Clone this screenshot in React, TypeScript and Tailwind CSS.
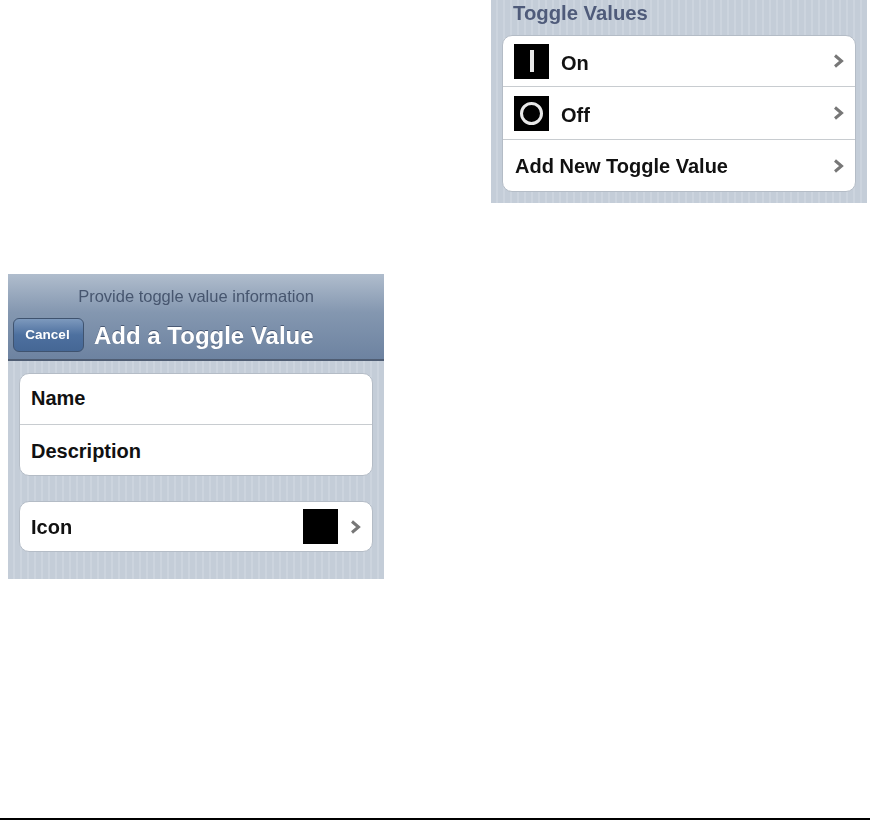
import React from 'react';

const stripes =
  'bg-[repeating-linear-gradient(90deg,#c4cdd8_0px,#c4cdd8_5px,#ccd4de_5px,#ccd4de_7px)]';

const Chevron = () => (
  <svg width="11" height="14" viewBox="0 0 11 14" className="shrink-0 ml-[1px] mr-[-1px]">
    <path d="M2 1.5 L8.5 7 L2 12.5" fill="none" stroke="#777" strokeWidth="3" />
  </svg>
);

const IconBox = ({ children }: { children?: React.ReactNode }) => (
  <div className="w-[35px] h-[35px] bg-black flex items-center justify-center shrink-0">{children}</div>
);

const Row = ({ children, last, h, pl = 'pl-3' }: { children: React.ReactNode; last?: boolean; h: string; pl?: string }) => (
  <div className={`flex items-center pr-3 ${pl} ${h} ${last ? '' : 'border-b border-[#c8ccd0]'}`}>{children}</div>
);

const Card = ({ children }: { children: React.ReactNode }) => (
  <div className="bg-white rounded-[10px] border border-[#b4bcc6] overflow-hidden">{children}</div>
);

const Label = ({ children, nudge = '' }: { children: React.ReactNode; nudge?: string }) => (
  <span className={`block text-[20px] leading-[24px] font-bold text-[#111] ${nudge}`}>{children}</span>
);

export default function App() {
  return (
    <div className="w-[870px] h-[820px] bg-white flex flex-col font-['Liberation_Sans',Arial,sans-serif]">
      {/* Toggle values list */}
      <div className="flex justify-end pr-[3px]">
        <div className={`w-[376px] h-[203px] ${stripes}`}>
          <div className="px-[11px] blur-[0.5px]">
            <div className="h-[35px] pl-[11px] text-[20.3px] leading-[26px] font-bold text-[#4f5b7a]">Toggle Values</div>
            <Card>
              <Row h="h-[51px]" pl="pl-[11px]">
                <IconBox>
                  <div className="w-[4px] h-[22px] bg-[#e8e8e8]" />
                </IconBox>
                <div className="ml-[12px] flex-1"><Label nudge="mt-[4px]">On</Label></div>
                <Chevron />
              </Row>
              <Row h="h-[53px]" pl="pl-[11px]">
                <IconBox>
                  <div className="w-[23px] h-[23px] rounded-full border-[3px] border-[#e8e8e8]" />
                </IconBox>
                <div className="ml-[12px] flex-1"><Label nudge="mt-[4px]">Off</Label></div>
                <Chevron />
              </Row>
              <Row h="h-[51px]" last>
                <div className="flex-1"><Label>Add New Toggle Value</Label></div>
                <Chevron />
              </Row>
            </Card>
          </div>
        </div>
      </div>

      {/* Add a toggle value form */}
      <div className={`ml-[8px] mt-[71px] w-[376px] h-[305px] ${stripes}`}>
        <div className="h-[87px] bg-[linear-gradient(180deg,#b0bdcd_0%,#8497b0_45%,#6d83a1_100%)] border-b-2 border-[#4f5d73]">
          <div className="blur-[0.5px]">
            <div className="pt-[12px] text-center text-[16.5px] leading-[20px] text-[#47566f]">Provide toggle value information</div>
            <div className="flex items-center mt-[10px] pl-[5px]">
              <div className="w-[71px] h-[34px] rounded-[6px] border border-[#3f536f] bg-[linear-gradient(180deg,#7d99bd_0%,#4d709f_50%,#456795_100%)] flex items-center justify-center pr-[2px] text-[13.5px] font-bold text-white">
                Cancel
              </div>
              <div className="ml-[10px] mt-[2px] text-[24px] font-bold text-white [text-shadow:0_-1px_0_#4a5a75]">Add a Toggle Value</div>
            </div>
          </div>
        </div>
        <div className="px-[11px] pt-[12px] blur-[0.5px]">
          <Card>
            <Row h="h-[51px]" pl="pl-[11px]"><Label nudge="mb-[2px]">Name</Label></Row>
            <Row h="h-[50px]" pl="pl-[11px]" last><Label nudge="mt-[2px]">Description</Label></Row>
          </Card>
          <div className="mt-[25px]">
            <Card>
              <Row h="h-[49px]" pl="pl-[11px]" last>
                <div className="flex-1"><Label>Icon</Label></div>
                <IconBox />
                <div className="ml-[11px]"><Chevron /></div>
              </Row>
            </Card>
          </div>
        </div>
      </div>

      <div className="mt-auto h-[2px] bg-black" />
    </div>
  );
}
